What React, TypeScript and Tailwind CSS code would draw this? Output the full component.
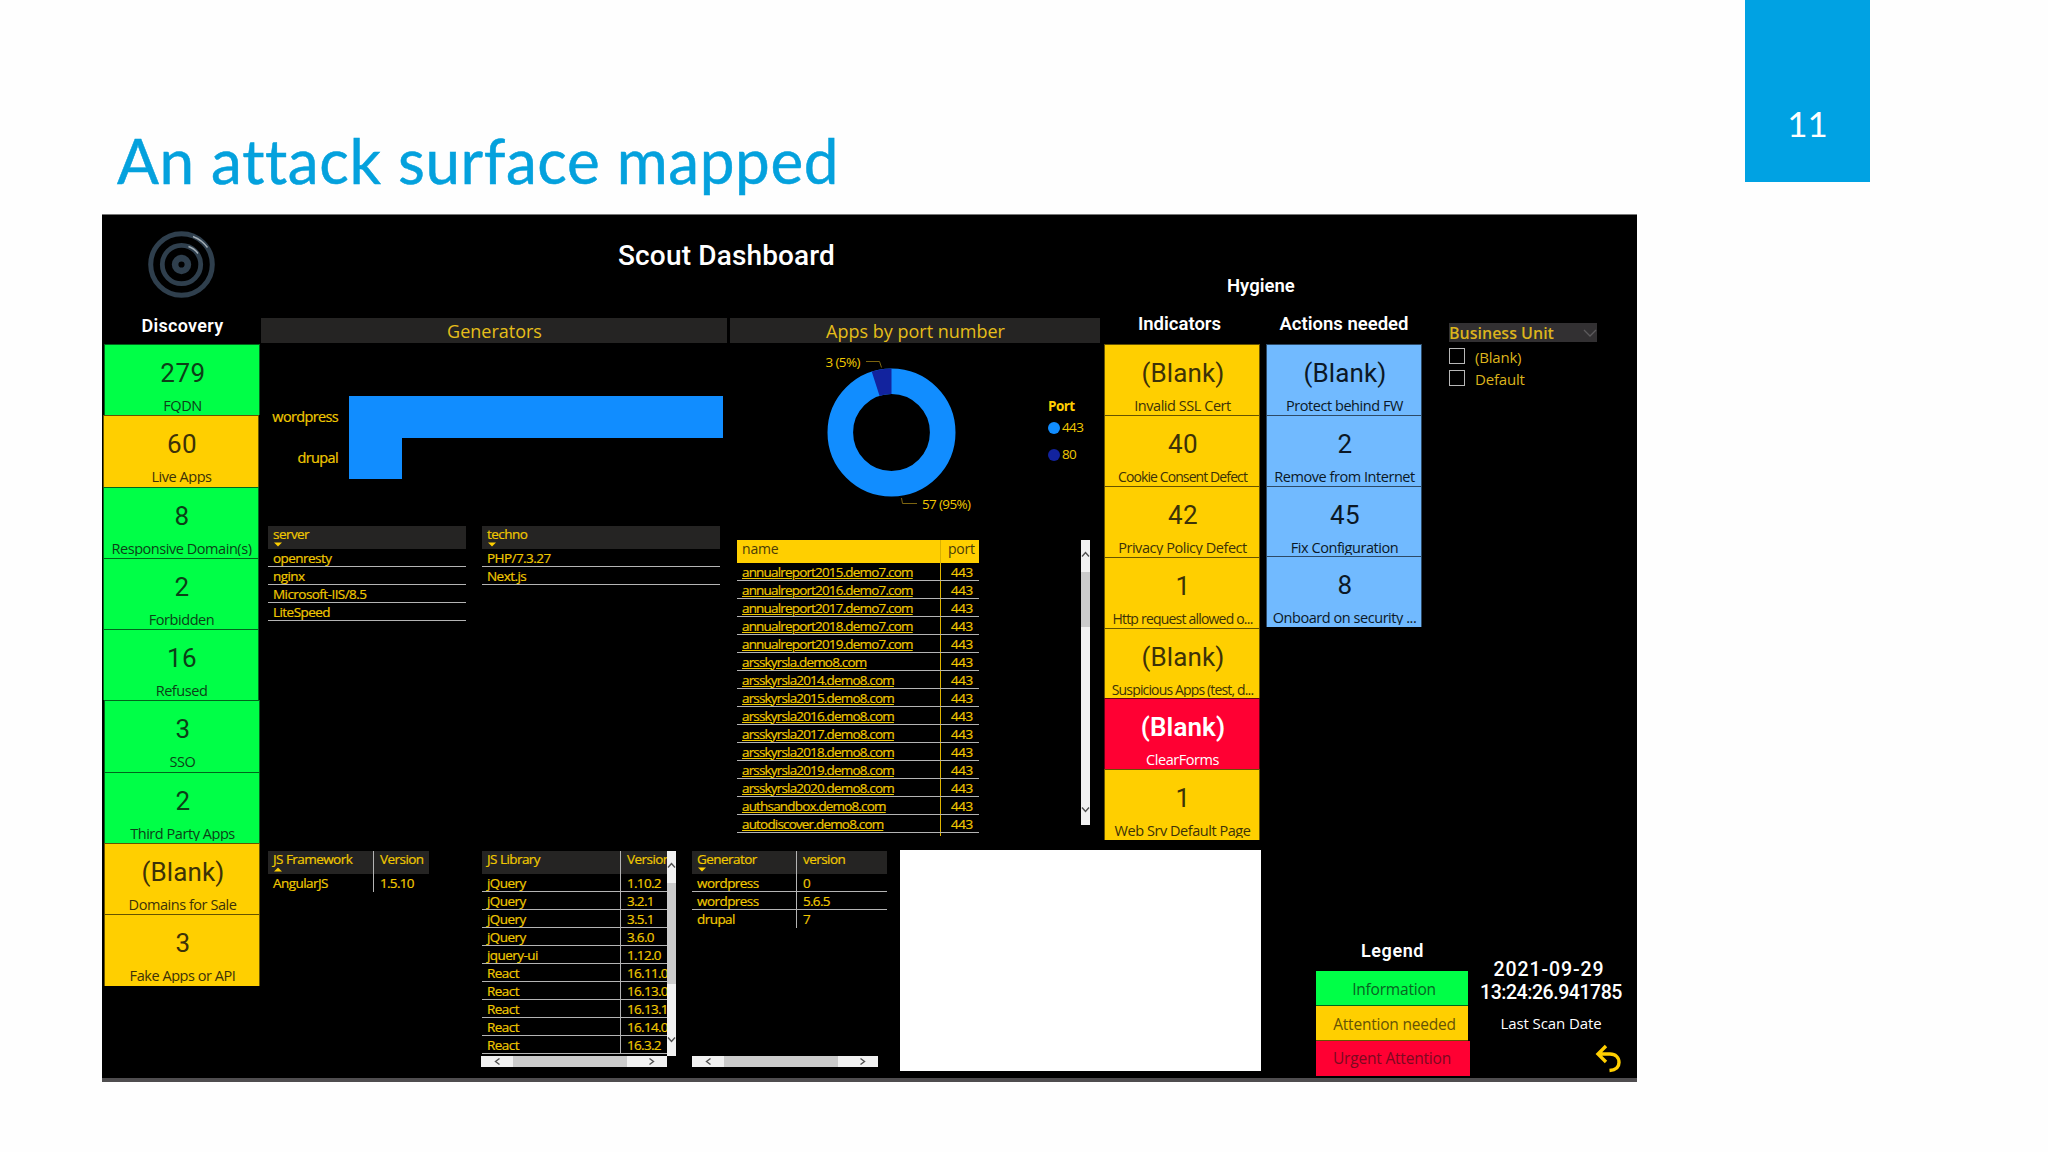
import clsx from "clsx";

type Tone = "green" | "yellow" | "red" | "blue";

type CardItem = {
  value: string;
  label: string;
  tone: Tone;
  fit?: string;
  shift?: boolean;
};

const tones: Record<Tone, string> = {
  green: "bg-[#00ff47] text-[#0c3f17]",
  yellow: "bg-[#ffcf00] text-[#3d3208]",
  red: "bg-[#ff0033] text-white",
  blue: "bg-[#71baff] text-[#0b1826]",
};

const discovery: CardItem[] = [
  { value: "279", label: "FQDN", tone: "green" },
  { value: "60", label: "Live Apps", tone: "yellow", shift: true },
  { value: "8", label: "Responsive Domain(s)", tone: "green", shift: true },
  { value: "2", label: "Forbidden", tone: "green", shift: true },
  { value: "16", label: "Refused", tone: "green", shift: true },
  { value: "3", label: "SSO", tone: "green" },
  { value: "2", label: "Third Party Apps", tone: "green" },
  { value: "(Blank)", label: "Domains for Sale", tone: "yellow" },
  { value: "3", label: "Fake Apps or API", tone: "yellow" },
];

const indicators: CardItem[] = [
  { value: "(Blank)", label: "Invalid SSL Cert", tone: "yellow" },
  { value: "40", label: "Cookie Consent Defect", tone: "yellow", fit: "text-[14px] tracking-[-0.9px]" },
  { value: "42", label: "Privacy Policy Defect", tone: "yellow" },
  { value: "1", label: "Http request allowed o...", tone: "yellow", fit: "text-[14px] tracking-[-0.8px]" },
  { value: "(Blank)", label: "Suspicious Apps (test, d...", tone: "yellow", fit: "text-[14px] tracking-[-0.85px]" },
  { value: "(Blank)", label: "ClearForms", tone: "red" },
  { value: "1", label: "Web Srv Default Page", tone: "yellow" },
];

const actions: CardItem[] = [
  { value: "(Blank)", label: "Protect behind FW", tone: "blue" },
  { value: "2", label: "Remove from Internet", tone: "blue" },
  { value: "45", label: "Fix Configuration", tone: "blue" },
  { value: "8", label: "Onboard on security ...", tone: "blue" },
];

const hosts = [
  "annualreport2015.demo7.com",
  "annualreport2016.demo7.com",
  "annualreport2017.demo7.com",
  "annualreport2018.demo7.com",
  "annualreport2019.demo7.com",
  "arsskyrsla.demo8.com",
  "arsskyrsla2014.demo8.com",
  "arsskyrsla2015.demo8.com",
  "arsskyrsla2016.demo8.com",
  "arsskyrsla2017.demo8.com",
  "arsskyrsla2018.demo8.com",
  "arsskyrsla2019.demo8.com",
  "arsskyrsla2020.demo8.com",
  "authsandbox.demo8.com",
  "autodiscover.demo8.com",
];

const libraries = [
  ["jQuery", "1.10.2"],
  ["jQuery", "3.2.1"],
  ["jQuery", "3.5.1"],
  ["jQuery", "3.6.0"],
  ["jquery-ui", "1.12.0"],
  ["React", "16.11.0"],
  ["React", "16.13.0"],
  ["React", "16.13.1"],
  ["React", "16.14.0"],
  ["React", "16.3.2"],
];

const din = "font-['Roboto',sans-serif]";

const Card = ({ item, height }: { item: CardItem; height: string }) => (
  <div
    className={clsx(
      "w-[156px] border border-b-0 border-black/60 pt-[12px] text-center whitespace-nowrap",
      height,
      tones[item.tone],
      item.shift && "-ml-px"
    )}
  >
    <div
      className={clsx(
        din,
        "pl-[2px] text-[26px] leading-8",
        item.value === "(Blank)" ? "tracking-[0.1px]" : "tracking-[0.5px]",
        item.tone === "red" && "font-semibold"
      )}
    >
      {item.value}
    </div>
    <div
      className={clsx(
        "mt-[7px] h-[17px] overflow-hidden pl-px leading-5",
        item.fit ?? "text-[14.5px] tracking-[-0.45px]"
      )}
    >
      {item.label}
    </div>
  </div>
);

const Sort = ({ up }: { up?: boolean }) => (
  <svg className="absolute bottom-[2px] left-[6px]" width="8" height="5" viewBox="0 0 8 5">
    <path d={up ? "M0 4.5 4 .5 8 4.5z" : "M0 .5h8L4 4.5z"} fill="#ffcf00" />
  </svg>
);

type TableProps = {
  head: string[];
  rows: string[][];
  first?: string;
  sort?: "up" | "down";
  openEnd?: boolean;
  className?: string;
};

const Table = ({ head, rows, first = "w-full", sort, openEnd, className }: TableProps) => (
  <div
    className={clsx(
      "overflow-hidden text-[13.5px] leading-[19px] tracking-[-0.55px] text-[#f0c800] [-webkit-text-stroke:0.2px_#f0c800]",
      className
    )}
  >
    <div className="relative flex h-[23px] bg-[#252423] leading-[17px]">
      <div className={clsx("shrink-0 pl-[5px]", first)}>{head[0]}</div>
      {head[1] && <div className="flex-1 border-l border-[#b4b4b4] pl-[6px]">{head[1]}</div>}
      {sort && <Sort up={sort === "up"} />}
    </div>
    {rows.map((row, i) => (
      <div
        key={i}
        className={clsx(
          "flex h-[18px]",
          !(openEnd && i === rows.length - 1) && "border-b border-[#b4b4b4]"
        )}
      >
        <div className={clsx("shrink-0 pl-[5px]", first)}>{row[0]}</div>
        {row[1] && (
          <div className="flex-1 border-l border-[#b4b4b4] pl-[6px] tracking-[-0.7px]">{row[1]}</div>
        )}
      </div>
    ))}
  </div>
);

const Chevron = ({ d }: { d: string }) => (
  <svg width="9" height="9" viewBox="0 0 9 9" fill="none" stroke="#505050" strokeWidth="1.4">
    <path d={d} />
  </svg>
);

const HScroll = () => (
  <div className="flex h-[11px] w-[186px] items-center bg-[#f1f1f1]">
    <div className="flex w-8 justify-center">
      <Chevron d="M6.5 1.5 2.5 4.5l4 3" />
    </div>
    <div className="h-full w-[114px] bg-[#cbcbcb]" />
    <div className="flex flex-1 justify-center pl-2">
      <Chevron d="M2.5 1.5l4 3-4 3" />
    </div>
  </div>
);

const Donut = () => (
  <svg width="310" height="197" viewBox="0 0 310 197" className="shrink-0">
    <circle cx="161.5" cy="89.5" r="51.2" fill="none" stroke="#118dff" strokeWidth="25.6" />
    <path d="M161.5 25.5A64 64 0 0 0 141.7 28.6L149.6 52.9A38.4 38.4 0 0 1 161.5 51.1z" fill="#12239e" />
    <path d="M136 18.5h13.5l2 6M171.5 155l1 5.5h14.5" fill="none" stroke="#7d6510" />
    <text x="95.5" y="23.5" textLength="35" fill="#f0c800" fontSize="13.5">
      3 (5%)
    </text>
    <text x="192" y="166" textLength="49" fill="#f0c800" fontSize="13.5">
      57 (95%)
    </text>
  </svg>
);

const Logo = () => (
  <svg className="mt-[16px] ml-[46px]" width="67" height="67" viewBox="0 0 67 67" fill="none">
    <g stroke="#2f3f4d">
      <circle cx="33.5" cy="33.5" r="30.8" strokeWidth="5" />
      <circle cx="33.5" cy="33.5" r="19.2" strokeWidth="4.8" />
      <circle cx="33.5" cy="33.5" r="6.4" strokeWidth="6.6" />
    </g>
    <path d="M45 5.5Q54 9 59.5 16.5M40.5 15.5Q46.5 17.5 50 22.5" stroke="#a3adb5" strokeWidth="1.4" />
  </svg>
);

const SectionBar = ({ title, className }: { title: string; className: string }) => (
  <div className={clsx("h-[25px] bg-[#252423] pl-px text-center text-[18px] leading-[26px] text-[#e6be1a]", className)}>
    {title}
  </div>
);

export default function App() {
  return (
    <div className="h-[1152px] w-[2048px] overflow-hidden bg-[#fefefe] font-['Open_Sans','Noto_Sans',sans-serif]">
      {/* Slide title */}
      <header className="flex h-[214px] justify-between font-['Lato',sans-serif]">
        <h1 className="mt-[120px] ml-[117px] text-[62px] leading-[80px] tracking-[0.6px] whitespace-nowrap text-[#04a1dd] [-webkit-text-stroke:0.5px_#04a1dd]">
          An attack surface mapped
        </h1>
        <div className="mr-[178px] h-[182px] w-[125px] bg-[#00a2e3] pt-[103px] text-center text-[35px] leading-10 text-white">
          11
        </div>
      </header>

      {/* Dashboard */}
      <main className="ml-[102px] h-[868px] w-[1535px] border-t border-b-4 border-t-[#777] border-b-[#4f4d4f] bg-black">
        <div className="flex h-[863px]">
          <aside className="w-[158px] shrink-0">
            <Logo />
            <h2 className={clsx(din, "mt-[16px] pl-[3px] text-center text-[18px] leading-6 font-semibold tracking-[0.3px] text-white")}>
              Discovery
            </h2>
            <div className="mt-[6px] ml-[2px]">
              {discovery.map((c) => (
                <Card key={c.label} item={c} height="h-[71.3px]" />
              ))}
            </div>
          </aside>

          <div className="flex-1">
            <div className="flex h-[96px] text-white">
              <h1 className={clsx(din, "mt-[25px] ml-[358px] w-[609px] text-[28px] leading-8 font-medium tracking-[0.15px]")}>
                Scout Dashboard
              </h1>
              <h2 className={clsx(din, "mt-[59px] text-[18.5px] leading-6 font-semibold")}>Hygiene</h2>
            </div>

            <div className="flex h-[767px]">
              <div className="w-[1003px] shrink-0">
                <div className="flex h-[539px]">
                  {/* Generators */}
                  <section className="w-[470px] pt-[7px]">
                    <SectionBar title="Generators" className="ml-px w-[466px]" />
                    <div className="mt-[53px] text-[14.5px] tracking-[-0.65px] text-[#f0c800] [-webkit-text-stroke:0.2px_#f0c800]">
                      <div className="flex h-[41.5px] items-center gap-[11px]">
                        <span className="w-[78px] text-right">wordpress</span>
                        <div className="h-full w-[374px] bg-[#118dff]" />
                      </div>
                      <div className="flex h-[41.5px] items-center gap-[11px]">
                        <span className="w-[78px] text-right">drupal</span>
                        <div className="h-full w-[53px] bg-[#118dff]" />
                      </div>
                    </div>
                    <div className="mt-[47px] ml-[8px] flex items-start gap-4">
                      <Table
                        className="w-[198px]"
                        head={["server"]}
                        sort="down"
                        rows={[["openresty"], ["nginx"], ["Microsoft-IIS/8.5"], ["LiteSpeed"]]}
                      />
                      <Table className="w-[238px]" head={["techno"]} sort="down" rows={[["PHP/7.3.27"], ["Next.js"]]} />
                    </div>
                  </section>

                  {/* Apps by port number */}
                  <section className="w-[374px] pt-[7px]">
                    <SectionBar title="Apps by port number" className="w-[370px]" />
                    <div className="flex h-[197px]">
                      <Donut />
                      <div className="ml-[8px] pt-[53px] text-[13.5px] tracking-[-0.6px] text-[#f0c800]">
                        <div className="leading-5 font-bold text-[#ffcf00]">Port</div>
                        <div className="mt-[3px] flex h-[17px] items-center gap-[2px]">
                          <span className="size-3 rounded-full bg-[#118dff]" />
                          443
                        </div>
                        <div className="mt-[10px] flex h-[17px] items-center gap-[2px]">
                          <span className="size-3 rounded-full bg-[#12239e]" />
                          80
                        </div>
                      </div>
                    </div>
                    <div className="ml-[7px] flex">
                      <div className="h-[296px] w-[242px] text-[13.5px] leading-[19px] tracking-[-0.83px] text-[#f0c800] [-webkit-text-stroke:0.2px_#f0c800]">
                        <div className="flex h-[23px] bg-[#ffcf00] text-[14px] leading-[18px] tracking-[-0.2px] text-[#4a3b08] [-webkit-text-stroke:0]">
                          <div className="w-[203px] pl-[5px]">name</div>
                          <div className="flex-1 border-l border-[#d9b000] pl-[7px]">port</div>
                        </div>
                        {hosts.map((h) => (
                          <div key={h} className="flex h-[18px] border-b border-[#b4b4b4]">
                            <div className="w-[203px] pl-[5px] underline">{h}</div>
                            <div className="flex-1 border-l border-[#e0b400] pl-[10px] tracking-[-0.5px]">443</div>
                          </div>
                        ))}
                        <div className="ml-[203px] h-[3px] w-px bg-[#e0b400]" />
                      </div>
                      <div className="ml-[102px] flex h-[285px] w-[9px] flex-col items-center bg-[#f1f1f1] pt-[10px]">
                        <Chevron d="M1 6.5l3.5-4 3.5 4" />
                        <div className="mt-[13px] h-[55px] w-full bg-[#cbcbcb]" />
                        <div className="mt-[178px]">
                          <Chevron d="M1 2.5l3.5 4 3.5-4" />
                        </div>
                      </div>
                    </div>
                  </section>

                  {/* Indicators */}
                  <section className="w-[159px]">
                    <h2 className={clsx(din, "pr-[8px] text-center text-[18.5px] leading-[26px] font-semibold text-white")}>
                      Indicators
                    </h2>
                    <div className="mt-[7px]">
                      {indicators.map((c) => (
                        <Card key={c.label} item={c} height="h-[70.9px]" />
                      ))}
                    </div>
                  </section>
                </div>

                {/* Bottom tables */}
                <div className="ml-[8px] flex items-start">
                  <Table
                    className="mt-px w-[161px]"
                    head={["JS Framework", "Version"]}
                    sort="up"
                    first="w-[105px]"
                    openEnd
                    rows={[["AngularJS", "1.5.10"]]}
                  />
                  <div className="mt-px ml-[52px] w-[195px]">
                    <div className="flex">
                      <Table
                        className="ml-px h-[205px] w-[185px]"
                        head={["JS Library", "Version"]}
                        first="w-[138px]"
                        rows={libraries}
                      />
                      <div className="flex h-[205px] w-[9px] flex-col items-center bg-[#f1f1f1] pt-[10px]">
                        <Chevron d="M1 6.5l3.5-4 3.5 4" />
                        <div className="mt-[13px] h-[101px] w-full bg-[#cbcbcb]" />
                        <div className="mt-[51px]">
                          <Chevron d="M1 2.5l3.5 4 3.5-4" />
                        </div>
                      </div>
                    </div>
                    <HScroll />
                  </div>
                  <div className="mt-px ml-[16px] w-[195px]">
                    <div className="h-[205px]">
                      <Table
                        className="w-[195px]"
                        head={["Generator", "version"]}
                        sort="down"
                        first="w-[104px]"
                        openEnd
                        rows={[
                          ["wordpress", "0"],
                          ["wordpress", "5.6.5"],
                          ["drupal", "7"],
                        ]}
                      />
                    </div>
                    <HScroll />
                  </div>
                  <div className="ml-[13px] h-[221px] w-[361px] bg-white" />
                </div>
              </div>

              <div className="flex flex-1 flex-col justify-between">
                <div className="flex">
                  {/* Actions needed */}
                  <section className="ml-[3px] w-[156px]">
                    <h2 className={clsx(din, "text-center text-[18.5px] leading-[26px] font-semibold whitespace-nowrap text-white")}>
                      Actions needed
                    </h2>
                    <div className="mt-[7px]">
                      {actions.map((c) => (
                        <Card key={c.label} item={c} height="h-[70.8px]" />
                      ))}
                    </div>
                  </section>

                  {/* Business unit filter */}
                  <section className="ml-[27px] pt-[12px] text-[15px] text-[#dcb41c]">
                    <div className="flex h-[19px] w-[148px] items-center justify-between bg-[#323032] text-[16px] font-semibold">
                      Business Unit
                      <svg width="14" height="8" viewBox="0 0 14 8" fill="none" stroke="#5c5a5c" strokeWidth="1.3">
                        <path d="M1 1l6 6 6-6" />
                      </svg>
                    </div>
                    {["(Blank)", "Default"].map((o) => (
                      <div key={o} className="mt-[6px] flex h-4 items-center gap-[10px] tracking-[-0.2px]">
                        <span className="size-4 border border-[#b8b8b8]" />
                        <span className="pt-[2px]">{o}</span>
                      </div>
                    ))}
                  </section>
                </div>

                {/* Legend and scan date */}
                <div className="ml-[53px] flex h-[139px]">
                  <section className="w-[155px] text-[15.5px] leading-[36px] tracking-[-0.2px]">
                    <h2 className={clsx(din, "mr-[2px] mb-[8px] text-center text-[18px] leading-6 font-semibold tracking-[0.6px] text-white")}>
                      Legend
                    </h2>
                    <div className="h-[35px] w-[152px] border-b border-black/60 bg-[#00ff47] pl-[4px] text-center text-[#096322]">
                      Information
                    </div>
                    <div className="h-[35px] w-[152px] border-b border-black/60 bg-[#ffcf00] pl-[5px] text-center text-[#665306]">
                      Attention needed
                    </div>
                    <div className="h-[35px] w-[154px] bg-[#ff0033] pr-[2px] text-center leading-[34px] text-[#7a0a20]">
                      Urgent Attention
                    </div>
                  </section>
                  <section className="ml-[6px] w-[148px] pt-[19px] text-center whitespace-nowrap text-white">
                    <div className={clsx(din, "text-[19.5px] leading-[23px] font-medium")}>
                      <div className="pr-[4px] tracking-[0.9px]">2021-09-29</div>
                      <div className="tracking-[-0.45px]">13:24:26.941785</div>
                    </div>
                    <div className="mt-[9px] text-[15px] leading-5 tracking-[-0.1px]">Last Scan Date</div>
                    <svg className="mt-[11px] ml-[118px]" width="28" height="30" viewBox="0 0 28 30" fill="none" stroke="#ffcf00" strokeWidth="3.4">
                      <path d="M11 2 3 10l8 8M3.5 10H15c5.500 0 9 3.5 9 8.5S20.5 26 14.5 26.5" />
                    </svg>
                  </section>
                </div>
              </div>
            </div>
          </div>
        </div>
      </main>
    </div>
  );
}
